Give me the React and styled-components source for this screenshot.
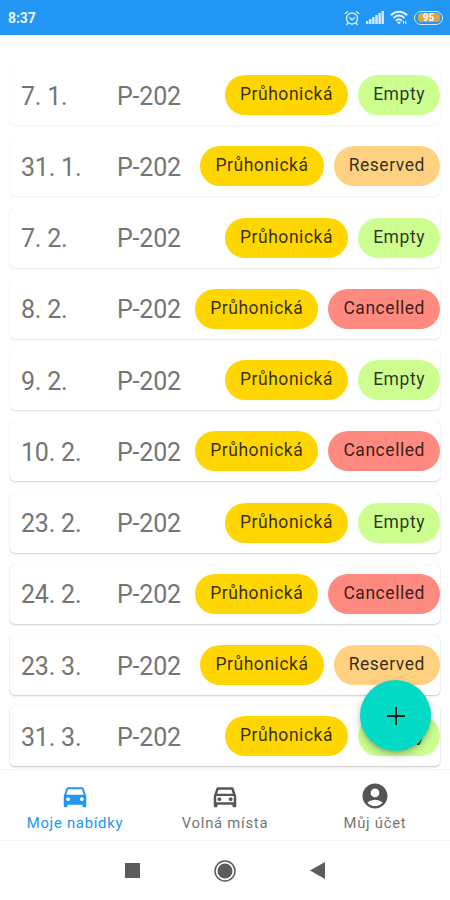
import React from 'react'
import styled, { createGlobalStyle } from 'styled-components'
import { MdDirectionsCar, MdOutlineDirectionsCar, MdAccountCircle } from 'react-icons/md'

const GlobalStyle = createGlobalStyle`
  *{
    box-sizing:border-box;
  }
  body{
    margin:0;
    background:#fff;
    font-family:Roboto, sans-serif;
  }
`

const Screen = styled.div`
  position:relative;
  display:flex;
  flex-direction:column;
  width:450px;
  height:900px;
  overflow:hidden;
  background:#fff;
`

const StatusBar = styled.header`
  display:flex;
  justify-content:space-between;
  align-items:center;
  flex:none;
  height:35px;
  padding:0 7px 0 8px;
  background:#2196f3;
  color:#e9f5ff;
`

const Clock = styled.span`
  font-size:14px;
  font-weight:700;
  line-height:16px;
  letter-spacing:-0.1px;
  margin-top:1px;
`

const StatusIcons = styled.div`
  display:flex;
  align-items:center;
  gap:6px;
  svg{
    display:block;
  }
`

const Battery = styled.div`
  display:flex;
  justify-content:center;
  align-items:center;
  width:29px;
  height:14px;
  border:1.5px solid #d5ebfc;
  border-radius:7px;
  span{
    width:22px;
    height:9px;
    border-radius:3px;
    background:#e2a243;
    color:#fff;
    font-size:10px;
    font-weight:700;
    line-height:9px;
    text-align:center;
  }
`

const List = styled.main`
  display:flex;
  flex-direction:column;
  gap:11.25px;
  flex:1;
  min-height:0;
  overflow:hidden;
  padding:30px 10px 0 10px;
`

const Card = styled.div`
  display:grid;
  grid-template-columns:96px 70px 1fr;
  align-items:center;
  flex:none;
  height:60px;
  padding-left:11px;
  border-radius:5px;
  background:#fff;
  box-shadow:0 1px 2px rgba(0,0,0,${props => props.$depth}), 0 0 1px rgba(0,0,0,0.1);
`

const CardText = styled.span`
  padding-top:3px;
  color:#757575;
  font-size:25px;
  line-height:30px;
  letter-spacing:-0.2px;
  white-space:nowrap;
`

const Chips = styled.div`
  display:flex;
  justify-content:flex-end;
  gap:10px;
`

const Chip = styled.span`
  height:40px;
  padding:0 15px;
  border-radius:20px;
  background:${props => props.$color};
  color:rgba(0,0,0,0.8);
  font-size:17.5px;
  line-height:39px;
  letter-spacing:0.55px;
  white-space:nowrap;
`

const AddButton = styled.button`
  position:absolute;
  right:19px;
  bottom:149px;
  display:flex;
  justify-content:center;
  align-items:center;
  width:71px;
  height:71px;
  padding:0;
  border:0;
  border-radius:50%;
  background:#03dac5;
  box-shadow:0 4px 8px rgba(0,0,0,0.22), 0 2px 3px rgba(0,0,0,0.12);
`

const BottomNav = styled.nav`
  display:grid;
  grid-template-columns:repeat(3, 1fr);
  flex:none;
  height:72px;
  border-top:1px solid #f4f4f4;
  border-bottom:1px solid #f4f4f4;
`

const NavItem = styled.div`
  display:flex;
  flex-direction:column;
  align-items:center;
  padding-top:11px;
  color:${props => (props.$active ? '#2196f3' : '#757575')};
  svg{
    width:30px;
    height:30px;
    color:${props => (props.$active ? '#2196f3' : '#555')};
  }
  span{
    margin-top:2px;
    font-size:14.8px;
    line-height:20px;
    letter-spacing:0.75px;
  }
`

const SystemBar = styled.footer`
  display:flex;
  justify-content:center;
  align-items:center;
  gap:74px;
  flex:none;
  height:59px;
  svg{
    display:block;
  }
`

const colors = {
  Empty: '#ccff90',
  Reserved: '#ffd180',
  Cancelled: '#ff8a80',
}

const offers = [
  { date: '7. 1.', status: 'Empty' },
  { date: '31. 1.', status: 'Reserved' },
  { date: '7. 2.', status: 'Empty' },
  { date: '8. 2.', status: 'Cancelled' },
  { date: '9. 2.', status: 'Empty' },
  { date: '10. 2.', status: 'Cancelled' },
  { date: '23. 2.', status: 'Empty' },
  { date: '24. 2.', status: 'Cancelled' },
  { date: '23. 3.', status: 'Reserved' },
  { date: '31. 3.', status: 'Empty' },
]

function AlarmIcon() {
  return (
    <svg width="16" height="16" viewBox="0 0 16 16" fill="none" stroke="#d5ebfc" strokeWidth="1.4" strokeLinecap="round">
      <circle cx="8" cy="8.5" r="5.5" />
      <path d="M1.2 3.6 3.6 1.4M14.8 3.6 12.4 1.4M3.8 13.2 2.6 14.6M12.2 13.2 13.4 14.6M5.8 7.8 8 10l2.4-2.2" />
    </svg>
  )
}

function SignalIcon() {
  return (
    <svg width="18" height="13" viewBox="0 0 18 13" fill="#d5ebfc">
      <rect x="0" y="10" width="2.4" height="3" />
      <rect x="3.1" y="8" width="2.4" height="5" />
      <rect x="6.2" y="6" width="2.4" height="7" />
      <rect x="9.3" y="4" width="2.4" height="9" />
      <rect x="12.4" y="2" width="2.4" height="11" />
      <rect x="15.5" y="0" width="2.4" height="13" />
    </svg>
  )
}

function WifiIcon() {
  return (
    <svg width="18" height="15" viewBox="0 0 18 15" fill="none" stroke="#e3f2fd" strokeWidth="2">
      <path d="M1 5.2C5.5.6 12.5.6 17 5.2M3.5 8c3.2-3.2 7.8-3.2 11 0M6 10.7c1.8-1.7 4.2-1.7 6 0" />
      <path d="M7 12.2 9 14.4l2-2.2c-1.2-1-2.8-1-4 0z" fill="#e3f2fd" stroke="none" />
      <path d="M13.5 14v-3M15.8 11v3" strokeWidth="1.1" />
    </svg>
  )
}

function OfferCard({ date, status, depth }) {
  return (
    <Card $depth={depth}>
      <CardText>{date}</CardText>
      <CardText>P-202</CardText>
      <Chips>
        <Chip $color="#ffd600">Průhonická</Chip>
        <Chip $color={colors[status]}>{status}</Chip>
      </Chips>
    </Card>
  )
}

function App() {
  return (
    <Screen>
      <GlobalStyle />
      <StatusBar>
        <Clock>8:37</Clock>
        <StatusIcons>
          <AlarmIcon />
          <SignalIcon />
          <WifiIcon />
          <Battery><span>95</span></Battery>
        </StatusIcons>
      </StatusBar>
      <List>
        {offers.map((offer, i) => (
          // shadows get deeper towards the bottom of the screen
          <OfferCard key={offer.date} {...offer} depth={0.03 + i * 0.022} />
        ))}
      </List>
      <BottomNav>
        <NavItem $active>
          <MdDirectionsCar />
          <span>Moje nabídky</span>
        </NavItem>
        <NavItem>
          <MdOutlineDirectionsCar />
          <span>Volná místa</span>
        </NavItem>
        <NavItem>
          <MdAccountCircle />
          <span>Můj účet</span>
        </NavItem>
      </BottomNav>
      <SystemBar>
        <svg width="15" height="15"><rect width="15" height="15" fill="#5c5c5c" /></svg>
        <svg width="22" height="22" viewBox="0 0 22 22">
          <circle cx="11" cy="11" r="10" fill="none" stroke="#5c5c5c" strokeWidth="1.5" />
          <circle cx="11" cy="11" r="7.5" fill="#5c5c5c" />
        </svg>
        <svg width="15" height="17" viewBox="0 0 15 17"><path d="M15 0v17L0 8.5z" fill="#5c5c5c" /></svg>
      </SystemBar>
      <AddButton aria-label="add">
        <svg width="18" height="18" viewBox="0 0 18 18" stroke="#06201d" strokeWidth="2">
          <path d="M9 0v18M0 9h18" />
        </svg>
      </AddButton>
    </Screen>
  )
}

export default App
